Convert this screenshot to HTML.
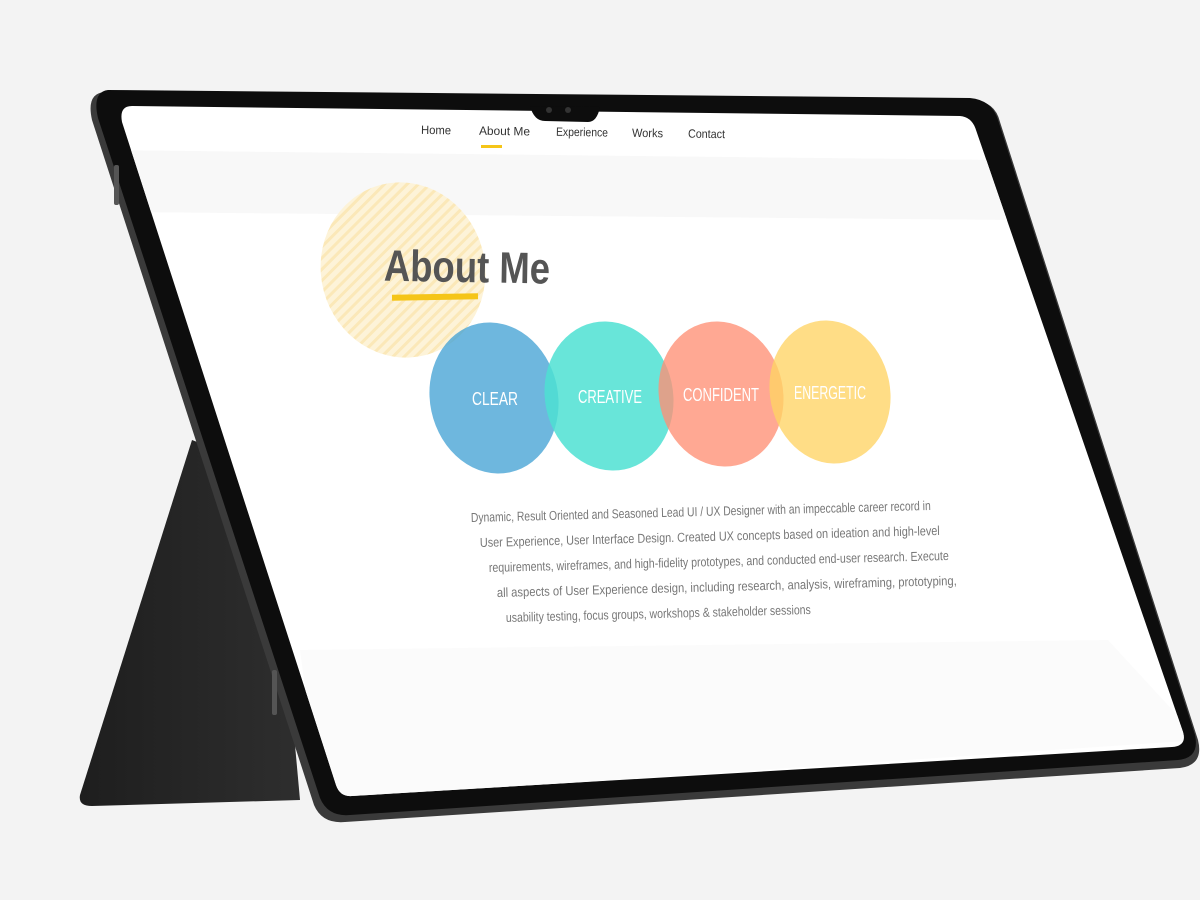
<!DOCTYPE html>
<html><head><meta charset="utf-8"><style>
html,body{margin:0;padding:0;background:#f3f3f3;width:1200px;height:900px;overflow:hidden}
svg{display:block}
text{font-family:"Liberation Sans",sans-serif}
</style></head><body>
<svg width="1200" height="900" viewBox="0 0 1200 900">
<defs>
<clipPath id="scr"><path d="M132,106 L960,116 Q972,117 976,130 L1183,732 Q1187,746 1172,747 L352,796 Q340,797 336,785 L122,122 Q119,106 132,106 Z"/></clipPath>
<pattern id="st" width="8" height="8" patternUnits="userSpaceOnUse" patternTransform="rotate(60)"><rect width="8" height="8" fill="#fdf3d8"/><rect width="3" height="8" fill="#fbe8b8"/></pattern>
<linearGradient id="sg" x1="0" x2="1"><stop offset="0" stop-color="#1e1e1e"/><stop offset="1" stop-color="#2e2e2e"/></linearGradient>
</defs>
<rect width="1200" height="900" fill="#f3f3f3"/>
<path d="M192,440 L80,795 Q78,806 92,806 L300,800 L270,470 Z" fill="url(#sg)"/>
<path d="M105,92 L972,100 Q995,101 1000,122 L1198,740 Q1204,765 1180,768 L345,822 Q322,824 314,805 L92,120 Q86,93 105,92 Z" fill="#3a3a3a"/>
<path d="M108,90 L970,98 Q992,100 998,120 L1195,735 Q1200,758 1178,760 L350,815 Q328,817 320,798 L98,118 Q92,92 108,90 Z" fill="#0d0d0d"/>
<g clip-path="url(#scr)">
<rect width="1200" height="900" fill="#ffffff"/>
<path d="M100,150 L1000,160 L1020,220 L120,212 Z" fill="#f8f8f8"/>
<path d="M300,650 L1108,640 L1200,740 L320,800 Z" fill="#fbfbfb"/>
</g>
<path d="M530,106 L600,107 Q597,122 588,122 L545,121 Q534,121 530,106 Z" fill="#0d0d0d"/>
<circle cx="549" cy="110" r="3" fill="#333"/><circle cx="568" cy="110" r="3" fill="#333"/>
<g font-size="12" fill="#333" transform="rotate(0.8 570 134)">
<text x="421" y="136" textLength="30" lengthAdjust="spacingAndGlyphs">Home</text>
<text x="479" y="136" textLength="51" lengthAdjust="spacingAndGlyphs">About Me</text>
<text x="556" y="136" textLength="52" lengthAdjust="spacingAndGlyphs">Experience</text>
<text x="632" y="136" textLength="31" lengthAdjust="spacingAndGlyphs">Works</text>
<text x="688" y="136" textLength="37" lengthAdjust="spacingAndGlyphs">Contact</text>
</g>
<rect x="481" y="145" width="21" height="3" fill="#f5c518"/>
<ellipse cx="403" cy="270" rx="82" ry="88" fill="url(#st)" transform="rotate(-15 403 270)"/>
<text x="384" y="282" font-size="44" font-weight="bold" fill="#555" transform="rotate(1 460 266)" textLength="166" lengthAdjust="spacingAndGlyphs">About Me</text>
<rect x="392" y="294" width="86" height="6" fill="#f5c518" transform="rotate(-1 435 297)"/>
<ellipse cx="494" cy="398" rx="64" ry="76" fill="#4aa5d6" opacity="0.8" transform="rotate(-12 494 398)"/>
<ellipse cx="609" cy="396" rx="64" ry="75" fill="#4ee0d2" opacity="0.85" transform="rotate(-12 609 396)"/>
<ellipse cx="721" cy="394" rx="62" ry="73" fill="#ff8f75" opacity="0.78" transform="rotate(-12 721 394)"/>
<ellipse cx="830" cy="392" rx="60" ry="72" fill="#ffd364" opacity="0.78" transform="rotate(-12 830 392)"/>
<g font-size="18" fill="#fff" text-anchor="middle">
<text x="495" y="405" textLength="46" lengthAdjust="spacingAndGlyphs">CLEAR</text>
<text x="610" y="403" textLength="64" lengthAdjust="spacingAndGlyphs">CREATIVE</text>
<text x="721" y="401" textLength="76" lengthAdjust="spacingAndGlyphs">CONFIDENT</text>
<text x="830" y="399" textLength="72" lengthAdjust="spacingAndGlyphs">ENERGETIC</text>
</g>
<g font-size="13" fill="#777">
<text x="471" y="522" transform="rotate(-1.5 471 522)" textLength="460" lengthAdjust="spacingAndGlyphs">Dynamic, Result Oriented and Seasoned Lead UI / UX Designer with an impeccable career record in</text>
<text x="480" y="547" transform="rotate(-1.5 480 547)" textLength="460" lengthAdjust="spacingAndGlyphs">User Experience, User Interface Design. Created UX concepts based on ideation and high-level</text>
<text x="489" y="572" transform="rotate(-1.5 489 572)" textLength="460" lengthAdjust="spacingAndGlyphs">requirements, wireframes, and high-fidelity prototypes, and conducted end-user research. Execute</text>
<text x="497" y="597" transform="rotate(-1.5 497 597)" textLength="460" lengthAdjust="spacingAndGlyphs">all aspects of User Experience design, including research, analysis, wireframing, prototyping,</text>
<text x="506" y="622" transform="rotate(-1.5 506 622)" textLength="305" lengthAdjust="spacingAndGlyphs">usability testing, focus groups, workshops &amp; stakeholder sessions</text>
</g>
<g fill="#555"><rect x="114" y="165" width="5" height="40" rx="2"/><rect x="272" y="670" width="5" height="45" rx="2"/></g>
</svg>
</body></html>
